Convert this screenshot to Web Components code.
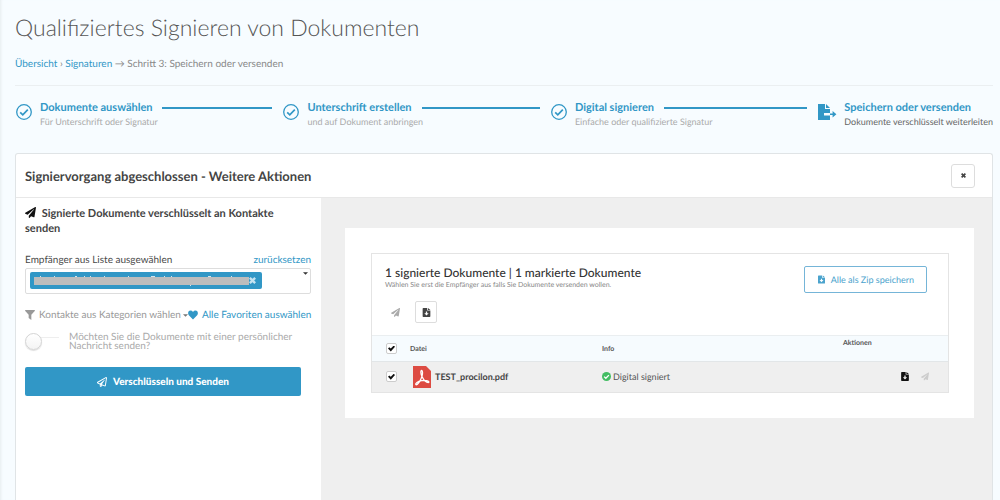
<!DOCTYPE html>
<html lang="de">
<head>
<meta charset="utf-8">
<title>Qualifiziertes Signieren von Dokumenten</title>
<style>
  html, body { height: 100%; margin: 0; }
  body { background: #f7fcff; color: #4a4a4a; font: 10px/14px Lato, "Liberation Sans", sans-serif; text-rendering: geometricPrecision; }
</style>
</head>
<body>
<sign-page></sign-page>
<script>
const define = (name, html, setup) => {
  const template = document.createElement('template');
  template.innerHTML = '<style>*{box-sizing:border-box}button,select,input{text-rendering:inherit}</style>' + html;
  customElements.define(name, class extends HTMLElement {
    constructor() {
      super();
      this.attachShadow({ mode: 'open' }).append(template.content.cloneNode(true));
    }
    connectedCallback() { if (setup) setup(this, this.shadowRoot); }
  });
};

const ICONS = {
  plane: ['0 0 512 512', '<path d="M476 3.2L12.5 270.6c-18.1 10.4-15.8 35.6 2.2 43.2L121 358.4l287.3-253.2c5.5-4.9 13.3 2.6 8.6 8.3L176 407v80.5c0 23.6 28.5 32.9 42.5 15.8L282 426l124.6 52.2c14.2 6 30.4-2.9 33-18.2l72-432C515 7.8 493.3-6.8 476 3.2z"/>'],
  planeLine: ['0 0 512 512', '<path d="M440 6.5L24 246.4c-34.4 19.9-31.1 70.8 5.7 85.9L144 379.6V464c0 46.4 59.2 65.5 86.6 28.6l43.8-59.1 111.9 46.2c5.9 2.4 12.1 3.6 18.3 3.6 8.2 0 16.3-2.1 23.6-6.2 12.8-7.2 21.6-20 23.9-34.5l59.4-387.2c6.1-40.1-36.9-68.8-71.5-48.9zM192 464v-64.6l36.6 15.1L192 464zm212.6-28.7l-153.8-63.5L391 169.5c10.7-15.5-9.5-33.5-23.7-21.2L155.8 332.6 48 288 464 48l-59.4 387.3z"/>'],
  done: ['0 0 16 16', '<g fill="none" stroke="currentColor"><circle cx="8" cy="8" r="7.3" stroke-width="1.3"/><path d="M4.2 8.4l2.6 2.5 5-5.2" stroke-width="1.7"/></g>'],
  export: ['0 0 19 16', '<path d="M0 0H7V5H12V9H6V11.4H12V16H0ZM8 0L12 4H8Z"/><path d="M12 9.4H14.6V7L18.4 10.2L14.6 13.4V11H12Z"/>'],
  save: ['0 0 12 14', '<path fill-rule="evenodd" d="M1 0H7V4H12V13Q12 14 11 14H1Q0 14 0 13V1Q0 0 1 0ZM5 5.5V8H2.6L6 11.8L9.4 8H7V5.5ZM8.2 0L12 3H8.2Z"/>'],
  close: ['0 0 10 10', '<path d="M2.4 0L5 2.6L7.6 0L10 2.4L7.4 5L10 7.6L7.6 10L5 7.4L2.4 10L0 7.6L2.6 5L0 2.4Z"/>'],
  caret: ['0 0 8 4', '<path d="M0 0H8L4 4Z"/>'],
  filter: ['0 0 12 12', '<path d="M0.6 0H11.4Q12.3 0.3 11.7 1.1L7.6 5.6V12L4.4 9.7V5.6L0.3 1.1Q-0.3 0.3 0.6 0Z"/>'],
  heart: ['0 0 12 11', '<path d="M6 10.8L1 5.8C-0.6 4 0 0.3 3 0.2Q5 0.2 6 1.9Q7 0.2 9 0.2C12 0.3 12.6 4 11 5.8Z"/>'],
  ok: ['0 0 16 16', '<circle cx="8" cy="8" r="8"/><path d="M3.8 8.2l3 3 5.5-5.7" fill="none" stroke="#fff" stroke-width="2.4"/>'],
  pdf: ['0 0 18 22', '<path fill="#dd4b42" d="M0 0H13L18 5V22H0Z"/><path fill="none" stroke="#fff" stroke-width="1.3" stroke-linejoin="round" d="M8.6 4.5C7.4 4.5 7.8 8 9 10.6C10.6 14 13.4 16.6 15.3 16.6C17 16.3 15.2 13.6 8.6 14.7C4.4 15.5 2.2 17.4 2.8 18.5C4.1 20 8 14.2 9 10.2C9.8 7 9.7 4.6 8.6 4.5Z"/>'],
};

define('ui-icon', `
  <style>
    :host { display: inline-flex; flex: none; width: 10px; height: 10px; }
    svg { width: 100%; height: 100%; fill: currentColor; }
  </style>
  <svg aria-hidden="true"></svg>`,
  (host, root) => {
    const [box, body] = ICONS[host.getAttribute('name')];
    const svg = root.querySelector('svg');
    svg.setAttribute('viewBox', box);
    svg.innerHTML = body;
  });

define('ui-check', `
  <style>
    :host { display: block; width: 11px; height: 11px; }
    input { appearance: none; display: grid; place-items: center; width: 11px; height: 11px; margin: 0;
      border: 1px solid #ccc; border-radius: 2px; background: #fff; }
    input:checked::before { content: ""; width: 7px; height: 6px; background: #111;
      clip-path: polygon(0 50%, 18% 28%, 40% 50%, 82% 0, 100% 22%, 40% 100%); }
  </style>
  <input type="checkbox" checked>`,
  (host, root) => root.querySelector('input').setAttribute('aria-label', host.getAttribute('label')));

define('wizard-step', `
  <style>
    :host { display: flex; flex: 1; gap: 8px; min-width: 0; }
    :host([current]) { flex: none; }
    ui-icon { width: 16px; height: 16px; margin: 3px 0 0 1px; color: #3197c6; }
    :host([current]) ui-icon { width: 19px; height: 16px; margin-right: -1px; }
    .text { flex: 1; min-width: 0; }
    .head { display: flex; align-items: center; gap: 10px; color: #3197c6; font-size: 11px; font-weight: 700; white-space: nowrap; }
    .head::after { content: ""; flex: 1; height: 2px; background: #3197c6; }
    :host([current]) .head::after { display: none; }
    .sub { color: #aaa; font-size: 9px; white-space: nowrap; }
    :host([current]) .sub { color: #666; }
  </style>
  <ui-icon name="done"></ui-icon>
  <div class="text"><div class="head"><slot></slot></div><div class="sub"><slot name="sub"></slot></div></div>`,
  (host, root) => {
    if (host.hasAttribute('current')) root.querySelector('ui-icon').replaceWith(
      Object.assign(document.createElement('template'), { innerHTML: '<ui-icon name="export"></ui-icon>' }).content);
  });

define('send-form', `
  <style>
    :host { display: block; padding: 8px 10px 0 9px; }
    h3 { margin: 0 0 17px; font-size: 11px; line-height: 15px; font-weight: 700; color: #444; }
    h3 ui-icon { margin-right: 3px; color: #111; vertical-align: -1px; width: 11px; height: 11px; }
    .row { display: flex; justify-content: space-between; align-items: center; white-space: nowrap; }
    a { color: #3197c6; text-decoration: none; }
    .field { display: flex; align-items: flex-start; justify-content: space-between; height: 26px; margin-top: 1px; padding: 3px 2px 3px 4px;
      border: 1px solid #ddd; border-radius: 2px; background: #fff; }
    .token { display: flex; align-items: center; width: 232px; height: 17px; padding: 0 6px 0 4px; border-radius: 2px; background: #3197c6; }
    .token svg { flex: 1; height: 13px; }
    .token button { display: flex; border: 0; padding: 0; background: none; color: #c5e3f1; }
    .token ui-icon { width: 7px; height: 7px; }
    .field input { flex: 1; min-width: 0; width: 0; height: 17px; border: 0; padding: 0; background: none; outline: 0; }
    .caret { width: 5px; height: 3px; color: #333; }
    .filters { margin-top: 14px; color: #999; }
    .filters label { display: flex; align-items: center; gap: 4px; }
    .filters label ui-icon, .fav ui-icon { width: 10px; height: 10px; }
    select { appearance: none; width: 143px; border: 0; padding: 0; background: none; color: #999; font: inherit; }
    .filters label .caret { width: 5px; height: 3px; margin-left: -3px; color: #777; }
    .fav { display: flex; align-items: center; gap: 4px; }
    .message { display: flex; gap: 10px; margin-top: 11px; color: #aaa; line-height: 9px; }
    .message input { appearance: none; flex: none; width: 34px; height: 15px; margin: 0;
      background: linear-gradient(#eee, #eee) 14px 4px / 20px 1px no-repeat; }
    .message input::before { content: ""; display: block; width: 15px; height: 15px; border: 1px solid #d4d4d4; border-radius: 50%;
      background: linear-gradient(#fff, #f4f4f4); box-shadow: 0 1px 1px #ddd; }
    .message label { flex: 1; }
    .send { display: flex; justify-content: center; align-items: center; gap: 6px; width: calc(100% - 10px); height: 29px; margin-top: 16px;
      border: 0; border-radius: 2px; background: #3197c6; color: #fff; font: 900 10px/14px Lato, sans-serif; }
  </style>
  <h3><ui-icon name="plane"></ui-icon> Signierte Dokumente verschlüsselt an Kontakte senden</h3>
  <div class="row"><label for="to">Empfänger aus Liste ausgewählen</label><a href="#">zurücksetzen</a></div>
  <div class="field">
    <span class="token">
      <svg viewBox="0 0 215 13" preserveAspectRatio="none" aria-hidden="true"><path stroke="#cfe6f2" d="M6 2.5h1M20 2.5h1M41 2.5h2M50 2.5h1M56 2.5h1M70 2.5h1M94 2.5h1M117 2.5h4M130 2.5h1M137 2.5h1M174 2.5h3M197 2.5h1M156 11.5h1"/><path fill="#bdbdbd" d="M0 3h215v8H0z"/></svg>
      <button type="button" aria-label="Entfernen"><ui-icon name="close"></ui-icon></button>
    </span>
    <input id="to" type="text"><ui-icon class="caret" name="caret"></ui-icon>
  </div>
  <div class="row filters">
    <label><ui-icon name="filter"></ui-icon><select aria-label="Kategorien"><option>Kontakte aus Kategorien wählen</option></select><ui-icon class="caret" name="caret"></ui-icon></label>
    <a class="fav" href="#"><ui-icon name="heart"></ui-icon>Alle Favoriten auswählen</a>
  </div>
  <div class="message"><input type="checkbox" role="switch" id="msg"><label for="msg">Möchten Sie die Dokumente mit einer persönlicher Nachricht senden?</label></div>
  <button type="button" class="send"><ui-icon name="planeLine"></ui-icon>Verschlüsseln und Senden</button>`);

define('document-list', `
  <style>
    :host { display: block; border: 1px solid #e4e4e4; background: #fff; }
    header { display: flex; justify-content: space-between; align-items: flex-start; padding: 12px 21px 0 13px; }
    h3 { margin: 0; font-size: 12px; line-height: 14px; font-weight: 500; color: #333; }
    p { margin: 0; font-size: 7px; line-height: 10px; color: #888; }
    button { display: flex; align-items: center; justify-content: center; padding: 0; border: 0; background: none; color: inherit; }
    .zip { gap: 6px; height: 27px; padding: 0 12px 0 13px; border: 1px solid #75b5d8; border-radius: 2px; background: #fff; color: #4ba3cd; font: 9px/14px Lato, sans-serif; }
    .zip ui-icon { width: 7px; height: 9px; }
    .tools { display: flex; gap: 9px; padding: 8px 12px 12px; color: #444; }
    .tools button { width: 22px; height: 22px; }
    .tools button:first-child { color: #aaa; }
    .tools button:last-child { border: 1px solid #ddd; border-radius: 2px; }
    .tools ui-icon { width: 9px; height: 9px; }
    table { width: 100%; table-layout: fixed; border-collapse: collapse; }
    th, td { padding: 0; text-align: left; }
    th { height: 26px; border-top: 1px solid #eaeef0; border-bottom: 1px solid #e2e6e8; background: #f6fbfe; font-size: 7px; line-height: 10px; font-weight: 700; color: #555; }
    td { height: 30px; background: #efefef; font-size: 9px; color: #555; }
    th:first-child, td:first-child { width: 38px; padding-left: 14px; }
    th:nth-child(2) { width: 192px; }
    th:last-child { width: 105px; vertical-align: top; padding-top: 2px; }
    .file, .info, .actions { display: flex; align-items: center; }
    .file { gap: 4px; padding-left: 3px; font-weight: 700; color: #444; }
    .file ui-icon { width: 18px; height: 22px; }
    .info { gap: 2px; }
    .info ui-icon { width: 9px; height: 9px; color: #43bd63; }
    .actions { justify-content: flex-end; gap: 12px; padding-right: 19px; color: #111; }
    .actions ui-icon { width: 8px; height: 9px; }
    .actions button:last-child { color: #ccc; }
  </style>
  <header>
    <div><h3>1 signierte Dokumente | 1 markierte Dokumente</h3><p>Wählen Sie erst die Empfänger aus falls Sie Dokumente versenden wollen.</p></div>
    <button type="button" class="zip"><ui-icon name="save"></ui-icon>Alle als Zip speichern</button>
  </header>
  <div class="tools">
    <button type="button" aria-label="Senden"><ui-icon name="plane"></ui-icon></button>
    <button type="button" aria-label="Speichern"><ui-icon name="save"></ui-icon></button>
  </div>
  <table>
    <thead><tr><th><ui-check label="Alle markieren"></ui-check></th><th>Datei</th><th>Info</th><th>Aktionen</th></tr></thead>
    <tbody><tr>
      <td><ui-check label="TEST_procilon.pdf markieren"></ui-check></td>
      <td><div class="file"><ui-icon name="pdf"></ui-icon>TEST_procilon.pdf</div></td>
      <td><div class="info"><ui-icon name="ok"></ui-icon>Digital signiert</div></td>
      <td><div class="actions"><button type="button" aria-label="Speichern"><ui-icon name="save"></ui-icon></button><button type="button" aria-label="Senden"><ui-icon name="plane"></ui-icon></button></div></td>
    </tr></tbody>
  </table>`);

define('action-panel', `
  <style>
    :host { display: flex; flex-direction: column; border: 1px solid #e0e4e6; border-bottom: 0; border-radius: 3px 3px 0 0; background: #fff; }
    header { display: flex; align-items: center; justify-content: space-between; height: 44px; padding: 0 17px 0 9px; border-bottom: 1px solid #e8e8e8; }
    h2 { margin: 0; font-size: 13px; line-height: 18px; font-weight: 700; color: #444; }
    button { display: flex; align-items: center; justify-content: center; width: 24px; height: 24px; padding: 0; border: 1px solid #ddd; border-radius: 3px; background: #fff; color: #444; }
    button ui-icon { width: 5px; height: 5px; }
    .body { flex: 1; display: grid; grid-template-columns: 305px 1fr; }
    .stage { padding: 30px 18px 30px 24px; background: #efefef; }
    .card { padding: 25px 25px 25px 26px; background: #fff; }
  </style>
  <header><h2>Signiervorgang abgeschlossen - Weitere Aktionen</h2><button type="button" aria-label="Schließen"><ui-icon name="close"></ui-icon></button></header>
  <div class="body"><slot name="form"></slot><div class="stage"><div class="card"><slot></slot></div></div></div>`);

define('sign-page', `
  <style>
    :host { display: flex; flex-direction: column; min-height: 100%; padding: 10px 7px 0 15px; box-sizing: border-box; box-shadow: inset 3px 0 3px -2px #e6ecef; }
    h1 { margin: 0; font-size: 23px; line-height: 34px; font-weight: 300; color: #555; }
    nav { margin-top: 13px; color: #888; }
    a { color: #3197c6; text-decoration: none; }
    .steps { display: flex; gap: 10px; margin-top: 14px; padding: 15px 0 24px; border-top: 1px solid #ebeff1; }
    action-panel { flex: 1; }
  </style>
  <h1>Qualifiziertes Signieren von Dokumenten</h1>
  <nav aria-label="Pfad"><a href="#">Übersicht</a> › <a href="#">Signaturen</a> → Schritt 3: Speichern oder versenden</nav>
  <div class="steps">
    <wizard-step>Dokumente auswählen<span slot="sub">Für Unterschrift oder Signatur</span></wizard-step>
    <wizard-step>Unterschrift erstellen<span slot="sub">und auf Dokument anbringen</span></wizard-step>
    <wizard-step>Digital signieren<span slot="sub">Einfache oder qualifizierte Signatur</span></wizard-step>
    <wizard-step current>Speichern oder versenden<span slot="sub">Dokumente verschlüsselt weiterleiten</span></wizard-step>
  </div>
  <action-panel><send-form slot="form"></send-form><document-list></document-list></action-panel>`);
</script>
</body>
</html>
